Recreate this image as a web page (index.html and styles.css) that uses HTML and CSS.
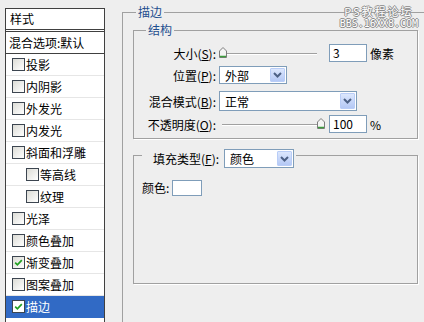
FILE: index.html
```html
<!DOCTYPE html>
<html lang="zh-CN">
<head>
    <meta charset="UTF-8">
    <title>图层样式 - 描边</title>
    <link rel="stylesheet" href="styles.css">
</head>
<body>

<!-- Left: list of layer effects -->
<div class="styles-panel">
    <div class="panel-title">样式</div>
    <div class="blend-row">混合选项:默认</div>
    <ul class="effect-list">
        <li><span class="check"></span>投影</li>
        <li><span class="check"></span>内阴影</li>
        <li><span class="check"></span>外发光</li>
        <li><span class="check"></span>内发光</li>
        <li><span class="check"></span>斜面和浮雕</li>
        <li class="sub"><span class="check"></span>等高线</li>
        <li class="sub"><span class="check"></span>纹理</li>
        <li><span class="check"></span>光泽</li>
        <li><span class="check"></span>颜色叠加</li>
        <li><span class="check on"><svg width="11" height="11" viewBox="0 0 11 11"><path d="M2.2 5.6 L4.4 7.8 L8.8 3.2" fill="none" stroke="#21a121" stroke-width="1.7"/></svg></span>渐变叠加</li>
        <li><span class="check"></span>图案叠加</li>
        <li class="selected"><span class="check on"><svg width="11" height="11" viewBox="0 0 11 11"><path d="M2.2 5.6 L4.4 7.8 L8.8 3.2" fill="none" stroke="#21a121" stroke-width="1.7"/></svg></span>描边</li>
    </ul>
</div>

<!-- Right: stroke settings -->
<div class="settings">
    <fieldset class="group outer">
        <legend>描边</legend>

        <fieldset class="group structure">
            <legend>结构</legend>

            <div class="row">
                <label>大小(<u>S</u>):</label>
                <div class="slider">
                    <svg class="thumb" width="8" height="11" viewBox="0 0 8 11"><path d="M0.5 4 L4 0.5 L7.5 4 V10.5 H0.5 Z" fill="#f4f4f4" stroke="#7c7c7c"/><path d="M1 9.5 H7" stroke="#3d9d3d" stroke-width="1.5"/></svg>
                </div>
                <span class="num">3</span>
                <span class="unit">像素</span>
            </div>

            <div class="row">
                <label>位置(<u>P</u>):</label>
                <div class="select short">
                    <span>外部</span>
                    <span class="arrow"><svg width="9" height="6" viewBox="0 0 9 6"><path d="M1 1 L4.5 4.5 L8 1" fill="none" stroke="#4d6185" stroke-width="2"/></svg></span>
                </div>
            </div>

            <div class="row tall">
                <label>混合模式(<u>B</u>):</label>
                <div class="select long">
                    <span>正常</span>
                    <span class="arrow"><svg width="9" height="6" viewBox="0 0 9 6"><path d="M1 1 L4.5 4.5 L8 1" fill="none" stroke="#4d6185" stroke-width="2"/></svg></span>
                </div>
            </div>

            <div class="row">
                <label>不透明度(<u>O</u>):</label>
                <div class="slider max">
                    <svg class="thumb" width="8" height="11" viewBox="0 0 8 11"><path d="M0.5 4 L4 0.5 L7.5 4 V10.5 H0.5 Z" fill="#f4f4f4" stroke="#7c7c7c"/><path d="M1 9.5 H7" stroke="#3d9d3d" stroke-width="1.5"/></svg>
                </div>
                <span class="num">100</span>
                <span class="unit">%</span>
            </div>
        </fieldset>

        <fieldset class="group fill">
            <legend>
                <label>填充类型(<u>F</u>):</label>
                <div class="select fill-type">
                    <span>颜色</span>
                    <span class="arrow"><svg width="9" height="6" viewBox="0 0 9 6"><path d="M1 1 L4.5 4.5 L8 1" fill="none" stroke="#4d6185" stroke-width="2"/></svg></span>
                </div>
            </legend>
            <div class="fill-body">
                <span>颜色:</span>
                <span class="swatch"></span>
            </div>
        </fieldset>
    </fieldset>

    <div class="watermark">
        <div class="wm-title">PS教程论坛</div>
        <div class="wm-url">BBS.16XX8.COM</div>
    </div>
</div>

</body>
</html>
```

FILE: styles.css
```css
/* General page */
body {
    margin: 0;
    height: 322px;
    overflow: hidden;
    display: flex;
    align-items: flex-start;
    background-color: #eeeeee;
    font-family: "Noto Sans CJK SC", "Noto Sans", sans-serif;
    font-size: 12px;
    color: #000;
}

/* Left list of effects */
.styles-panel {
    flex-shrink: 0;
    width: 100px;
    height: 330px;
    box-sizing: border-box;
    margin: 8px 0 0 5px;
    border: 1px solid #404040;
    background-color: #fff;
}

.panel-title {
    height: 20px;
    line-height: 20px;
    padding-left: 4px;
    border-bottom: 3px double #404040;
}

.blend-row {
    height: 21px;
    line-height: 21px;
    padding-left: 3px;
    border-bottom: 1px solid #404040;
    white-space: nowrap;
}

.effect-list {
    list-style: none;
    margin: 0;
    padding: 0;
}

.effect-list li {
    display: flex;
    align-items: center;
    height: 22px;
    box-sizing: border-box;
    padding-left: 6px;
    border-bottom: 1px solid #e6e6e6;
    white-space: nowrap;
}

.effect-list li.sub {
    padding-left: 20px;
}

.effect-list li.selected {
    background-color: #316ac5;
    border-bottom-color: #316ac5;
    color: #fff;
}

/* Checkbox */
.check {
    display: flex;
    align-items: center;
    justify-content: center;
    width: 13px;
    height: 13px;
    box-sizing: border-box;
    margin-right: 1px;
    border: 1px solid #3c4550;
    background: linear-gradient(135deg, #dcdcd6, #ffffff);
}

.selected .check {
    background: #fff;
}

/* Right settings */
.settings {
    position: relative;
    flex: 1;
    min-width: 0;
    height: 100%;
    overflow: hidden;
    margin-left: 17px;
    padding-top: 4px;
    box-sizing: border-box;
}

.group {
    margin: 0;
    padding: 0;
    min-width: 0;
    border: 1px solid #a0a0a0;
    box-shadow: 1px 1px 0 #fff;
}

.group > legend {
    padding: 0 2px;
    line-height: 16px;
    color: #1f4f8f;
}

.outer {
    width: 340px;
    height: 340px;
    box-sizing: border-box;
    padding-left: 10px;
}

.outer > legend {
    margin-left: 3px;
}

.structure {
    width: 285px;
    box-sizing: border-box;
    margin-top: 2px;
    padding: 6px 0 5px;
}

.structure > legend {
    margin-left: 12px;
}

/* Rows inside the structure box */
.row {
    display: flex;
    align-items: center;
    height: 18px;
    margin-top: 4px;
}

.row:first-of-type {
    margin-top: 0;
}

.row.tall {
    height: 20px;
    margin-top: 7px;
}

.row label {
    width: 82px;
    margin-right: 3px;
    text-align: right;
    white-space: nowrap;
}

/* Slider */
.slider {
    position: relative;
    width: 106px;
    height: 18px;
}

.slider::before {
    content: "";
    position: absolute;
    left: 3px;
    right: 8px;
    top: 9px;
    height: 1px;
    background-color: #a0a0a0;
    box-shadow: 0 1px 0 #fff;
}

.thumb {
    position: absolute;
    top: 3px;
    left: 0;
}

.slider.max .thumb {
    left: auto;
    right: 0;
}

.num {
    width: 38px;
    height: 18px;
    box-sizing: border-box;
    margin-left: 4px;
    padding-left: 3px;
    border: 1px solid #7f9db9;
    background-color: #fff;
    line-height: 16px;
}

.unit {
    margin-left: 3px;
}

/* Drop-down */
.select {
    display: flex;
    align-items: center;
    justify-content: space-between;
    height: 18px;
    box-sizing: border-box;
    padding: 1px 1px 1px 5px;
    border: 1px solid #7f9db9;
    background-color: #fff;
    color: #000;
}

.select.short {
    width: 68px;
}

.select.long {
    width: 138px;
    height: 20px;
}

.arrow {
    display: flex;
    align-items: center;
    justify-content: center;
    width: 15px;
    height: 100%;
    box-sizing: border-box;
    border: 1px solid #b9cdf7;
    border-radius: 1px;
    background: linear-gradient(#dce7fd, #b4c8f5);
}

/* Fill type box */
.fill {
    width: 285px;
    box-sizing: border-box;
    margin-top: 9px;
    padding: 0 0 0 8px;
}

.fill > legend {
    display: flex;
    align-items: flex-start;
    height: 14px;
    padding: 0 2px 0 11px;
    color: #000;
}

.fill > legend label {
    margin-top: 1px;
    line-height: 19px;
    white-space: nowrap;
}

.select.fill-type {
    width: 70px;
    height: 19px;
    margin: 1px 0 0 5px;
}

.fill-body {
    display: flex;
    align-items: flex-start;
    height: 121px;
    box-sizing: border-box;
    padding-top: 18px;
}

.fill-body span:first-child {
    line-height: 16px;
}

.swatch {
    width: 30px;
    height: 16px;
    box-sizing: border-box;
    margin-left: 3px;
    border: 1px solid #7f9db9;
    background-color: #fff;
}

/* Forum watermark */
.watermark {
    position: absolute;
    top: 5px;
    right: 6px;
    text-align: center;
    color: #fff;
    text-shadow: 1px 0 #8a8a8a, -1px 0 #8a8a8a, 0 1px #8a8a8a, 0 -1px #8a8a8a;
}

.wm-title {
    font-size: 11px;
    line-height: 12px;
    letter-spacing: 2px;
}

.wm-url {
    margin-top: 2px;
    font-family: "DejaVu Sans Mono", monospace;
    font-size: 10px;
    line-height: 10px;
}
```
